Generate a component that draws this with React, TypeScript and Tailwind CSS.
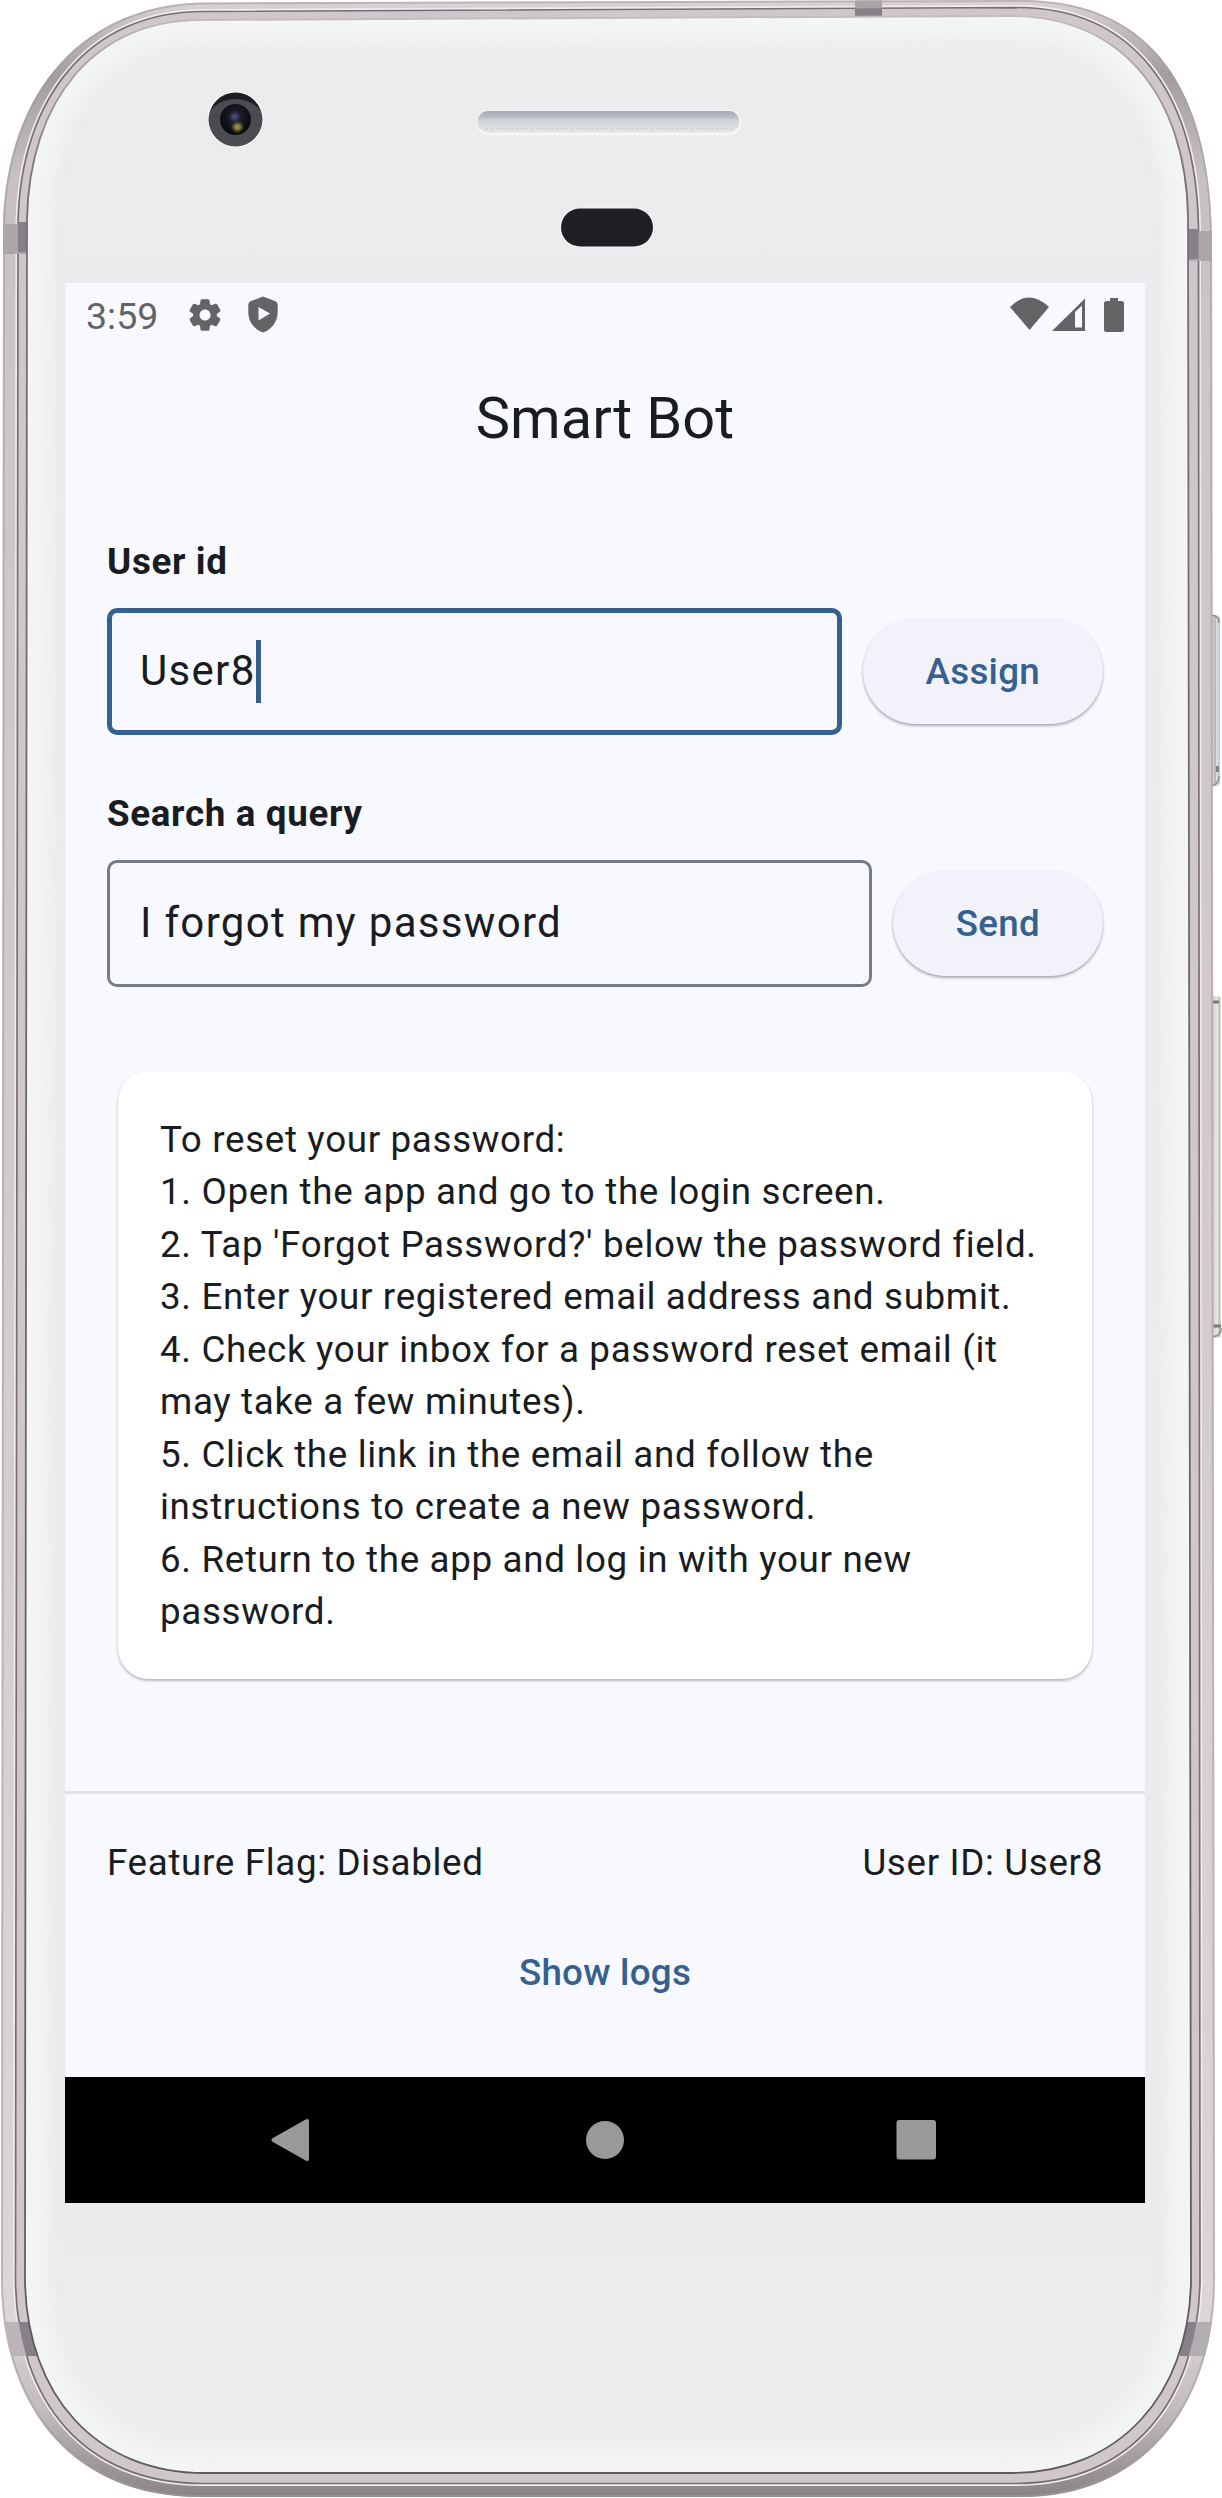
import React from "react";

const BODY = "M3 227 C6 90 85 2.5 207 2.5 L1022 0 C1140 0 1209 75 1212 233 L1215 2283 C1213 2410 1140 2497 1022 2497 L200 2497 C75 2497 3 2410 1 2283 Z";
const GROOVE = "M18 224 C20 97 90 11.5 203 11.5 L1018 7.5 C1129 8 1196 87 1198.5 227 L1200 2283 C1197 2402 1130 2483.5 1016 2483.5 L202 2483.5 C85 2483.5 18 2402 15.5 2283 Z";
const PANEL = "M27 220 C29 100 95 20 200 20 L1012 16 C1120 16 1186 95 1188 217 L1191 2283 C1188 2395 1120 2473 1010 2473 L205 2473 C95 2473 28 2395 25 2283 Z";

function DeviceFrame() {
  return (
    <svg className="absolute inset-0" width="1222" height="2498" viewBox="0 0 1222 2498">
      <defs>
        <linearGradient id="rim" x1="0" y1="0" x2="0" y2="1">
          <stop offset="0" stopColor="#ddd6d9" />
          <stop offset="0.008" stopColor="#c9c2c6" />
          <stop offset="0.03" stopColor="#a39da1" />
          <stop offset="0.07" stopColor="#c6bfc3" />
          <stop offset="0.15" stopColor="#cdc5c9" />
          <stop offset="0.5" stopColor="#d3cbcf" />
          <stop offset="0.93" stopColor="#dcd6d8" />
          <stop offset="0.965" stopColor="#c2bbbf" />
          <stop offset="1" stopColor="#898388" />
        </linearGradient>
        <linearGradient id="panelEdge" gradientUnits="userSpaceOnUse" x1="0" y1="16" x2="0" y2="2473">
          <stop offset="0" stopColor="#c2bdc0" />
          <stop offset="0.02" stopColor="#aaa4a8" />
          <stop offset="0.07" stopColor="#757075" />
          <stop offset="1" stopColor="#5f5a5f" />
        </linearGradient>
        <linearGradient id="face" x1="0" y1="0" x2="0" y2="1">
          <stop offset="0" stopColor="#ebeced" />
          <stop offset="0.12" stopColor="#eaebec" />
          <stop offset="0.9" stopColor="#eaebec" />
          <stop offset="1" stopColor="#ecedee" />
        </linearGradient>
        <linearGradient id="grille" x1="0" y1="0" x2="0" y2="1">
          <stop offset="0" stopColor="#a5a8b3" />
          <stop offset="0.3" stopColor="#bcbfc8" />
          <stop offset="0.45" stopColor="#d3d5da" />
          <stop offset="1" stopColor="#e2e3e6" />
        </linearGradient>
        <linearGradient id="key" x1="0" y1="0" x2="1" y2="0">
          <stop offset="0" stopColor="#9fa19f" />
          <stop offset="0.3" stopColor="#d9dbd7" />
          <stop offset="0.7" stopColor="#e6e8e4" />
          <stop offset="0.8" stopColor="#b4b6b3" />
          <stop offset="1" stopColor="#e4e5e3" />
        </linearGradient>
        <linearGradient id="powerKey" x1="0" y1="0" x2="1" y2="0">
          <stop offset="0" stopColor="#a9abab" />
          <stop offset="0.3" stopColor="#cfd1d1" />
          <stop offset="0.45" stopColor="#a6a8aa" />
          <stop offset="0.6" stopColor="#dadddf" />
          <stop offset="1" stopColor="#c3c7ca" />
        </linearGradient>
        <radialGradient id="lens" cx="0.5" cy="0.4" r="0.6">
          <stop offset="0" stopColor="#3c3d60" />
          <stop offset="0.35" stopColor="#191a24" />
          <stop offset="1" stopColor="#08090b" />
        </radialGradient>
        <filter id="soft" x="-10%" y="-10%" width="120%" height="120%">
          <feGaussianBlur stdDeviation="8" />
        </filter>
        <filter id="glint" x="-50%" y="-50%" width="200%" height="200%">
          <feGaussianBlur stdDeviation="1.6" />
        </filter>
        <clipPath id="panelClip"><path d={PANEL} /></clipPath>
        <clipPath id="bodyClip"><path d={BODY} /></clipPath>
        <clipPath id="grooveClip"><path d={GROOVE} /></clipPath>
      </defs>
      <rect x="1211" y="615" width="9" height="171" rx="4" fill="url(#powerKey)" />
      <path d="M1212 615 q7 1 7 8 M1212 786 q7 -2 7 -10" stroke="#8e908e" strokeWidth="1.5" fill="none" />
      <path d="M1217.5 772 v-6" stroke="#7e8490" strokeWidth="3" />
      <rect x="1211" y="996" width="10" height="342" rx="4" fill="url(#key)" />
      <path d="M1212 1002 h7 M1212 1326 h9" stroke="#777a75" strokeWidth="3" />
      <path d="M1212 1337 q9 -1 9 -9" stroke="#989a96" strokeWidth="2" fill="none" />
      <path d={BODY} fill="url(#rim)" />
      <g clipPath="url(#bodyClip)">
        <path d={BODY} fill="none" stroke="#a29a9f" strokeWidth="4" opacity="0.55" />
        <path d={GROOVE} fill="none" stroke="#f0ecee" strokeWidth="5" />
        <path d={GROOVE} fill="#cfc7cb" stroke="#757075" strokeWidth="1.7" />
        <rect x="0" y="224" width="32" height="30" fill="#aca6aa" />
        <rect x="1185" y="231" width="32" height="30" fill="#aca6aa" />
        <rect x="0" y="2322" width="40" height="34" fill="#bbb5b9" />
        <rect x="1180" y="2322" width="40" height="34" fill="#b2adb0" />
        <rect x="855" y="0" width="27" height="18" fill="#aaa4a8" />
      </g>
      <g clipPath="url(#grooveClip)" fill="#878187">
        <rect x="0" y="222" width="32" height="30" />
        <rect x="1180" y="229" width="32" height="30" />
        <rect x="0" y="2322" width="40" height="34" />
        <rect x="1180" y="2322" width="40" height="34" />
        <rect x="855" y="0" width="27" height="18" />
      </g>
      <path d={PANEL} fill="url(#face)" />
      <g clipPath="url(#panelClip)">
        <path d={PANEL} fill="none" stroke="#f3f4f5" strokeWidth="44" filter="url(#soft)" />
        <path d={PANEL} fill="none" stroke="#f5f6f7" strokeWidth="5" />
      </g>
      <path d={PANEL} fill="none" stroke="url(#panelEdge)" strokeWidth="1.8" />
      <circle cx="235.5" cy="119.5" r="28" fill="#fafafa" />
      <circle cx="235.5" cy="119.5" r="27" fill="#4b4c52" />
      <path d="M211 110 a26 26 0 0 1 49 0 a30 26 0 0 0 -49 0" fill="#1c1d21" />
      <circle cx="235.5" cy="119.5" r="15.5" fill="url(#lens)" />
      <ellipse cx="237.5" cy="127" rx="4.5" ry="4" fill="#9a9140" filter="url(#glint)" />
      <circle cx="234" cy="117" r="3" fill="#5558a0" opacity="0.7" filter="url(#glint)" />
      <rect x="476.500" y="110" width="265" height="25.500" rx="12.7" fill="#f5f5f6" />
      <rect x="477.500" y="111" width="262" height="21.500" rx="10.7" fill="url(#grille)" />
      <path d="M486 122.5 h246 M486 128.5 h246" stroke="#c8cad0" strokeWidth="1.2" strokeDasharray="2 3" />
      <rect x="560" y="207.5" width="94" height="40" rx="20" fill="#f8f8f9" />
      <rect x="561" y="208.5" width="92" height="38" rx="19" fill="#1d1f23" />
    </svg>
  );
}

function StatusBar() {
  return (
    <div className="flex h-[63px] shrink-0 items-center pr-[20px] pl-[21px] text-[#636466]">
      <span className="w-[73px] pt-[4px] text-[37.5px] leading-[59px]">3:59</span>
      <svg className="ml-[27px]" width="38" height="38" viewBox="0 0 24 24" fill="currentColor">
        <path d="M19.5 12c0-.23-.01-.45-.03-.68l1.86-1.41c.4-.3.51-.86.26-1.3l-1.87-3.23c-.25-.44-.79-.62-1.25-.42l-2.15.91c-.37-.26-.76-.49-1.17-.68l-.29-2.31C14.8 2.38 14.37 2 13.87 2h-3.73c-.51 0-.94.38-1 .88l-.29 2.31c-.41.19-.8.42-1.17.68l-2.15-.91c-.46-.2-1-.02-1.25.42L2.41 8.62c-.25.44-.14.99.26 1.3l1.86 1.41c-.02.22-.03.44-.03.67s.01.45.03.68l-1.86 1.41c-.4.3-.51.86-.26 1.3l1.87 3.23c.25.44.79.62 1.25.42l2.15-.91c.37.26.76.49 1.17.68l.29 2.31c.06.5.49.88.99.88h3.73c.5 0 .93-.38.99-.88l.29-2.31c.41-.19.8-.42 1.17-.68l2.15.91c.46.2 1 .02 1.25-.42l1.87-3.23c.25-.44.14-.99-.26-1.3l-1.86-1.41c.03-.23.04-.45.04-.68zm-7.46 3.5c-1.93 0-3.5-1.57-3.5-3.5s1.57-3.5 3.5-3.5 3.5 1.57 3.5 3.5-1.57 3.5-3.5 3.5z" />
      </svg>
      <svg className="ml-[24px]" width="30" height="37" viewBox="0 0 30 37" fill="currentColor">
        <path fillRule="evenodd" d="M15 0.5 L27 5 Q29.7 6 29.7 8.5 V16 C29.7 26 23.5 33.5 15 36.5 C6.500 33.500 0.300 26 0.300 16 V8.500 Q0.300 6 3 5 Z M10.500 11 V24.500 L22 17.500 Z" />
      </svg>
      <svg className="ml-auto" width="116" height="38" viewBox="0 0 116 38" fill="currentColor">
        <path d="M1 12.500 Q20 -6.500 40 12.500 L20.500 35.500 Z" transform="translate(0 -1.500)" />
        <path fillRule="evenodd" d="M43 35 L76 2.500 V35 Z M66 16 V31.500 H73 V9.500 Z" />
        <path d="M101 2 h8 v3 h3.500 q2.500 0 2.500 2.500 V33.500 q0 2.500 -2.500 2.500 H97.500 q-2.500 0 -2.500 -2.500 V7.500 q0 -2.500 2.500 -2.500 H101 Z" />
      </svg>
    </div>
  );
}

function PillButton({ children }: { children: React.ReactNode }) {
  return (
    <button className="h-[106px] shrink-0 rounded-full bg-[#f2f3fa] px-[63px] pt-[2px] text-[36.75px] font-medium tracking-[0.26px] text-[#36618e] shadow-[0_2px_3px_rgba(0,0,0,0.28),0_1px_2px_rgba(0,0,0,0.08)]">
      {children}
    </button>
  );
}

const ANSWER = [
  "To reset your password:",
  "1. Open the app and go to the login screen.",
  "2. Tap 'Forgot Password?' below the password field.",
  "3. Enter your registered email address and submit.",
  "4. Check your inbox for a password reset email (it may take a few minutes).",
  "5. Click the link in the email and follow the instructions to create a new password.",
  "6. Return to the app and log in with your new password.",
];

export default function App() {
  return (
    <div className="relative h-[2498px] w-[1222px] overflow-hidden bg-white pt-[283px] pl-[65px] font-[Roboto,sans-serif] text-[#191c20]">
      <DeviceFrame />
      <main className="relative flex h-[1920px] w-[1080px] flex-col bg-[#f8f9ff]">
        <StatusBar />
        <h1 className="h-[147px] text-center text-[57.75px] leading-[145px] font-normal">Smart Bot</h1>

        <section className="mt-[42px] px-[42px]">
          <label className="block h-[53px] text-[36.75px] leading-[53px] font-bold tracking-[0.66px]">User id</label>
          <div className="mt-[20px] flex h-[127px] items-start gap-[21px]">
            <div className="flex h-[127px] flex-1 items-center rounded-[10px] border-[5px] border-[#36618e] pl-[28px] text-[42px] tracking-[1.31px]">
              <span className="pb-[2px]">User8</span>
              <span className="h-[63px] w-[5px] bg-[#36618e]" />
            </div>
            <div className="pt-[10px]">
              <PillButton>Assign</PillButton>
            </div>
          </div>
        </section>

        <section className="mt-[52px] px-[42px]">
          <label className="block h-[53px] text-[36.75px] leading-[53px] font-bold tracking-[0.66px]">Search a query</label>
          <div className="mt-[20px] flex h-[127px] items-start gap-[21px]">
            <div className="flex h-[127px] flex-1 items-center rounded-[10px] border-[3px] border-[#777b83] pb-[2px] pl-[30px] text-[42px] tracking-[1.31px]">
              I forgot my password
            </div>
            <div className="pt-[10px]">
              <PillButton>Send</PillButton>
            </div>
          </div>
        </section>

        <article className="mx-[53px] mt-[84px] h-[608px] rounded-[31px] bg-white px-[42px] pt-[42.5px] text-[36.75px] leading-[52.5px] tracking-[0.66px] shadow-[0_2px_3px_rgba(0,0,0,0.22),0_1px_3px_rgba(0,0,0,0.08)]">
          {ANSWER.map((line) => (
            <p key={line}>{line}</p>
          ))}
        </article>

        <footer className="mt-auto h-[286px] border-t-[3px] border-[#e1e2e5]">
          <div className="mt-[42px] flex justify-between px-[42px] text-[36.75px] leading-[54px] tracking-[0.66px]">
            <span>Feature Flag: Disabled</span>
            <span>User ID: User8</span>
          </div>
          <button className="mx-auto mt-[57px] block text-[36.75px] leading-[52px] font-medium tracking-[0.26px] text-[#36618e]">
            Show logs
          </button>
        </footer>

        <nav className="h-[126px] shrink-0 bg-black">
          <svg width="1080" height="126" viewBox="0 0 1080 126" fill="#999" stroke="#999" strokeLinejoin="round">
            <path d="M208.500 63 L242 44 V82 Z" strokeWidth="4" />
            <circle cx="540" cy="63" r="19" strokeWidth="0" />
            <rect x="832.500" y="44" width="37.500" height="37.500" rx="2" strokeWidth="2" />
          </svg>
        </nav>
      </main>
    </div>
  );
}
